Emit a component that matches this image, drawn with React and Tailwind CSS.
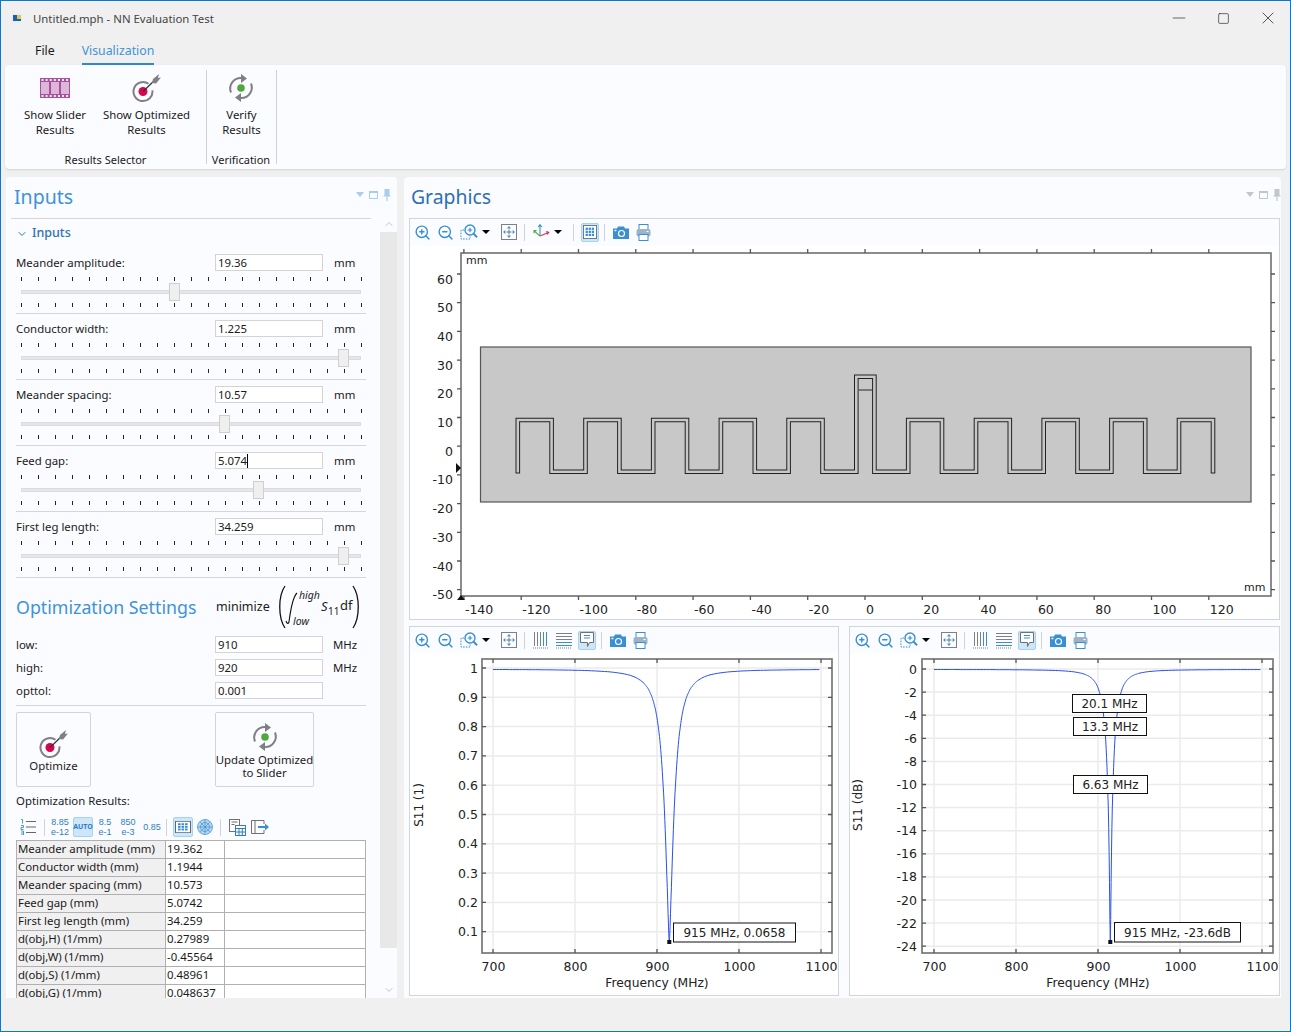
import { Minus, Square, X, ChevronDown, ChevronUp, ZoomIn, ZoomOut } from "lucide-react";

const SLIDERS = [
  { label: "Meander amplitude:", value: "19.36", thumb: 153 },
  { label: "Conductor width:", value: "1.225", thumb: 322 },
  { label: "Meander spacing:", value: "10.57", thumb: 203 },
  { label: "Feed gap:", value: "5.074", thumb: 237, caret: true },
  { label: "First leg length:", value: "34.259", thumb: 322 }
];

const RESULTS = [
  ["Meander amplitude (mm)", "19.362"],
  ["Conductor width (mm)", "1.1944"],
  ["Meander spacing (mm)", "10.573"],
  ["Feed gap (mm)", "5.0742"],
  ["First leg length (mm)", "34.259"],
  ["d(obj,H) (1/mm)", "0.27989"],
  ["d(obj,W) (1/mm)", "-0.45564"],
  ["d(obj,S) (1/mm)", "0.48961"],
  ["d(obj,G) (1/mm)", "0.048637"]
];

const BLUE = "#3a8fd3";
const CHART_FONT = "'DejaVu Sans', sans-serif";

function range(from, to, step) {
  const out = [];
  for (let v = from; step > 0 ? v <= to + 1e-9 : v >= to - 1e-9; v += step) out.push(Math.round(v * 100) / 100);
  return out;
}

function s11(f) {
  const c = 0.996;
  const m = 0.0658;
  const x = (f - 915) / 10;
  const a = 1 - (m * m) / (c * c);
  return c * Math.sqrt(Math.max(1 - a / (1 + x * x), 0));
}

function curvePath(toX, toY) {
  const pts = [];
  for (let f = 700; f <= 1100; f += f > 880 && f < 950 ? 0.5 : 4) pts.push(`${toX(f).toFixed(1)},${toY(s11(f)).toFixed(1)}`);
  return "M" + pts.join("L");
}

function TargetIcon({ className }) {
  return (
    <svg viewBox="0 0 30 30" className={className}>
      <path d="M16.5 10.8a9.5 9.5 0 1 0 3.9 6.5" fill="none" stroke="#808080" strokeWidth="2" />
      <circle cx="11" cy="18.5" r="4.5" fill="#d8064e" />
      <path d="M11 18.5L24 6" stroke="#333" strokeWidth="1.2" />
      <path d="M21 6l6-5-1 4 3-.5-5 6-4-.5z" fill="#808080" />
    </svg>
  );
}

function SyncIcon({ className }) {
  return (
    <svg viewBox="0 0 30 30" className={className}>
      <path d="M5 19.5a10.5 10.5 0 0 1 11-14.4" fill="none" stroke="#808080" strokeWidth="2" />
      <path d="M15 1l6 4.5-6 4.5z" fill="#808080" />
      <path d="M25 10.5a10.5 10.5 0 0 1-11 14.4" fill="none" stroke="#808080" strokeWidth="2" />
      <path d="M15 29l-6-4.5 6-4.5z" fill="#808080" />
      <circle cx="15" cy="15" r="3.8" fill="#4fa83d" />
    </svg>
  );
}

function FilmIcon() {
  return (
    <svg viewBox="0 0 30 20" className="w-[30px] h-[20px]">
      <rect width="30" height="20" fill="#a9509f" />
      {[1, 11, 21].map((x) => (
        <rect key={x} x={x} y="4" width="8" height="12" fill="#dcb7d8" />
      ))}
      {range(1.5, 27, 4.1).map((x) => (
        <g key={x} fill="#f5e9f4">
          <rect x={x} y="1" width="2" height="2" />
          <rect x={x} y="17" width="2" height="2" />
        </g>
      ))}
    </svg>
  );
}

function ZoomBoxIcon() {
  return (
    <svg viewBox="0 0 18 18" className="w-[18px] h-[18px]" fill="none" stroke={BLUE}>
      <circle cx="10" cy="7" r="5" strokeWidth="1.4" />
      <path d="M13.6 10.6l3.4 3.6" strokeWidth="2" />
      <path d="M7.7 7h4.6M10 4.7v4.6" strokeWidth="1.2" />
      <path d="M4 7H1v9h9v-2.5" strokeWidth="1" strokeDasharray="1.6 1.2" />
    </svg>
  );
}

function FitIcon() {
  return (
    <svg viewBox="0 0 16 16" className="w-[16px] h-[16px]">
      <rect x="0.5" y="0.5" width="15" height="15" fill="none" stroke="#808080" />
      <path d="M8 2l2 2.4H6zM8 14l2-2.4H6zM2 8l2.4-2v4zM14 8l-2.4-2v4z" fill={BLUE} />
      <path d="M5.5 8h5M8 5.5v5" stroke="#707070" strokeWidth="1" />
    </svg>
  );
}

function AxesIcon() {
  return (
    <svg viewBox="0 0 18 18" className="w-[18px] h-[18px]" fill="none" strokeWidth="1.1">
      <path d="M8 13V2M6.2 4L8 1.6 9.8 4" stroke={BLUE} />
      <path d="M8 13l8.5-3.5M14.2 8.6l2.6.8-1.6 2.1" stroke="#d8306e" />
      <path d="M8 13L2 7.8M2 10.2V7.6h2.6" stroke="#5aa84a" />
    </svg>
  );
}

function CameraIcon() {
  return (
    <svg viewBox="0 0 16 13" className="w-[16px] h-[13px]">
      <path d="M0 2.5h4L5 .5h6l1 2h4V13H0z" fill={BLUE} />
      <circle cx="8.5" cy="7.5" r="3.6" fill="#fff" />
      <circle cx="8.5" cy="7.5" r="2.4" fill={BLUE} />
      <rect x="1.4" y="3.8" width="2" height="1.4" fill="#fff" />
    </svg>
  );
}

function PrinterIcon() {
  return (
    <svg viewBox="0 0 15 17" className="w-[15px] h-[17px]">
      <rect x="3" y="0.5" width="9" height="5" fill="#fff" stroke={BLUE} />
      <rect x="0.5" y="5" width="14" height="7.5" rx="2" fill="#9db4c8" />
      <rect x="10.5" y="7" width="2" height="1" fill="#fff" />
      <rect x="3" y="10.5" width="9" height="6" fill="#fff" stroke={BLUE} />
    </svg>
  );
}

function TableGridIcon({ wide }) {
  return (
    <svg viewBox="0 0 16 16" className={wide ? "w-[16px] h-[12px]" : "w-[14px] h-[14px]"} preserveAspectRatio="none">
      <rect x="0.5" y="0.5" width="15" height="15" fill="#fff" stroke="#5a6a78" />
      {[3, 6.5, 10].map((x) =>
        [3, 6.5, 10].map((y) => <rect key={`${x}-${y}`} x={x} y={y} width="2.6" height="2.6" fill={BLUE} />)
      )}
    </svg>
  );
}

function VGridIcon() {
  return (
    <svg viewBox="0 0 16 17" className="w-[16px] h-[17px]" fill="none">
      <path d="M1.5 0v14M4.5 0v14M7.5 0v14" stroke="#808080" />
      <path d="M10.5 0v14M13.5 0v14" stroke={BLUE} />
      <path d="M0 16h16" stroke="#808080" strokeDasharray="1 1" />
    </svg>
  );
}

function HGridIcon() {
  return (
    <svg viewBox="0 0 16 17" className="w-[16px] h-[17px]" fill="none">
      <path d="M0 1.5h16M0 4.5h16M0 7.5h16" stroke="#808080" />
      <path d="M0 10.5h16M0 13.5h16" stroke={BLUE} />
      <path d="M0 16h16" stroke="#808080" strokeDasharray="1 1" />
    </svg>
  );
}

function CommentIcon() {
  return (
    <svg viewBox="0 0 14 16" className="w-[14px] h-[16px]" fill="#fff">
      <path d="M.5.5h13v10H9.5l-2 4v-4h-7z" stroke="#707070" />
      <path d="M4 3.5h6M4 6h6" stroke={BLUE} />
    </svg>
  );
}

function Cell({ children, className = "" }) {
  return <div className={`w-[23px] h-[24px] flex items-center justify-center shrink-0 ${className}`}>{children}</div>;
}

function Caret() {
  return (
    <div className="w-[10px] ml-[1px] flex justify-center shrink-0">
      <div className="w-0 h-0 border-x-[4px] border-x-transparent border-t-[4px] border-t-black" />
    </div>
  );
}

function Sep({ className = "" }) {
  return <div className={`w-px h-[17px] bg-[#cfd3d8] shrink-0 ${className}`} />;
}

function Active({ children, className = "" }) {
  return (
    <div className={`w-[18px] h-[19px] flex items-center justify-center shrink-0 rounded-[2px] bg-[#cde6fa] border border-[#a6d2f3] ${className}`}>
      {children}
    </div>
  );
}

function ZoomGroup() {
  return (
    <>
      <Cell><ZoomIn size={17} color={BLUE} strokeWidth={2} /></Cell>
      <Cell><ZoomOut size={17} color={BLUE} strokeWidth={2} /></Cell>
      <Cell><ZoomBoxIcon /></Cell>
      <Caret />
      <Cell className="ml-[6px]"><FitIcon /></Cell>
      <Sep className="ml-[4px]" />
    </>
  );
}

function PaneControls({ color }) {
  return (
    <div className="flex items-center gap-[5px]">
      <div className="w-0 h-0 border-x-[4px] border-x-transparent border-t-[5px]" style={{ borderTopColor: color }} />
      <div className="w-[9px] h-[8px] border border-t-2" style={{ borderColor: color }} />
      <svg viewBox="0 0 8 12" className="w-[8px] h-[12px]">
        <path d="M1.5 0h5v6l1.5 1.5H0L1.5 6zM3.4 7.5h1.2V12H3.4z" fill={color} />
      </svg>
    </div>
  );
}

function TextBox({ value, caret }) {
  return (
    <div className="w-[108px] h-[17px] border border-[#d4d4d4] bg-white pl-[2px] text-[11.4px] leading-[15px] flex items-center text-[#1a1a1a]">
      {value}
      {caret && <span className="w-px h-[14px] bg-black" />}
    </div>
  );
}

function SliderRow({ label, value, thumb, caret }) {
  const ticks = range(0, 20, 1);
  const row = (
    <div className="mx-[5px] w-[341px] flex justify-between">
      {ticks.map((t) => <span key={t} className="w-px h-[4px] bg-[#222]" />)}
    </div>
  );
  return (
    <div className="h-[66px] border-b border-[#d6d6d6] pt-[6px]">
      <div className="flex items-center h-[17px]">
        <div className="w-[199px] text-[11.4px]">{label}</div>
        <TextBox value={value} caret={caret} />
        <div className="ml-[11px] text-[11.4px]">mm</div>
      </div>
      <div className="relative mt-[6px]">
        {row}
        <div className="mx-[5px] w-[340px] h-[4px] mt-[9px] mb-[9px] bg-[#e6e6e6] border border-[#dcdcdc]" />
        {row}
        <div
          className="absolute top-[6px] w-[11px] h-[18px] bg-[#efefef] border border-[#cfcfcf]"
          style={{ left: thumb }}
        />
      </div>
    </div>
  );
}

function FieldRow({ label, value, unit }) {
  return (
    <div className="flex items-center h-[17px] mb-[6px]">
      <div className="w-[199px] text-[11.4px]">{label}</div>
      <TextBox value={value} />
      {unit && <div className="ml-[10px] text-[11.4px]">{unit}</div>}
    </div>
  );
}

function Formula() {
  return (
    <svg viewBox="0 0 84 46" className="w-[84px] h-[46px] ml-[7px] shrink-0">
      <path d="M8 2C1 12 1 34 8 44" fill="none" stroke="#111" strokeWidth="1.3" />
      <path d="M76 2C83 12 83 34 76 44" fill="none" stroke="#111" strokeWidth="1.3" />
      <path d="M20 9C16 13 14 22 12 38c-.5 2-2 2-3-1" fill="none" stroke="#111" strokeWidth="1.1" />
      <text x="22" y="15" fontSize="10.5" fontStyle="italic" fontFamily="'Noto Sans', sans-serif" fill="#222">high</text>
      <text x="16" y="41" fontSize="10.5" fontStyle="italic" fontFamily="'Noto Sans', sans-serif" fill="#222">low</text>
      <text x="44" y="27" fontSize="13" fontStyle="italic" fontFamily="'Noto Sans', sans-serif" fill="#222">S</text>
      <text x="51" y="31" fontSize="10" fontFamily="'Noto Sans', sans-serif" fill="#222">11</text>
      <text x="63" y="26" fontSize="13" fontFamily="'Noto Sans', sans-serif" fill="#222">df</text>
    </svg>
  );
}

function NumIcon({ top, bottom, className = "" }) {
  return (
    <div className={`flex flex-col items-center justify-center shrink-0 font-['Liberation_Sans',sans-serif] text-[9px] leading-[10.5px] text-[#2f7fc1] ${className}`}>
      <div>{top}</div>
      {bottom && <div>{bottom}</div>}
    </div>
  );
}

function ResultsToolbar() {
  return (
    <div className="flex items-center h-[24px] mt-[6px] pl-[4px]">
      <svg viewBox="0 0 16 16" className="w-[16px] h-[16px] shrink-0" fill="none">
        <path d="M6 2.5h10M6 8h10M6 13.5h10" stroke="#666" />
        <path d="M1 .5h1.5v4M1 6.5h2.5v2H1v2h2.5M1 12h2.5v4H1M1 14h2.5" stroke={BLUE} strokeWidth="0.9" />
      </svg>
      <Sep className="ml-[8px]" />
      <NumIcon top="8.85" bottom="e-12" className="w-[24px] ml-[3px]" />
      <Active className="ml-[1px] !w-[20px] !h-[20px]">
        <span className="text-[7px] font-bold text-[#2f7fc1]">AUTO</span>
      </Active>
      <NumIcon top="8.5" bottom="e-1" className="w-[24px]" />
      <NumIcon top="850" bottom="e-3" className="w-[24px] ml-[-1px]" />
      <NumIcon top="0.85" className="w-[22px] ml-[1px]" />
      <Sep className="ml-[3px]" />
      <Active className="ml-[6px] !w-[20px] !h-[20px]"><TableGridIcon wide /></Active>
      <svg viewBox="0 0 16 16" className="w-[16px] h-[16px] ml-[4px] shrink-0" fill="#b9d6ef" stroke={BLUE} strokeWidth="0.7">
        <circle cx="8" cy="8" r="7.5" />
        <circle cx="8" cy="8" r="4.5" fill="none" />
        <path d="M8 .5v15M.5 8h15M2.7 2.7l10.6 10.6M13.3 2.7L2.7 13.3" />
      </svg>
      <Sep className="ml-[7px]" />
      <svg viewBox="0 0 17 17" className="w-[17px] h-[17px] ml-[8px] shrink-0" fill="#fff">
        <rect x="0.5" y="0.5" width="10" height="12" stroke="#707070" />
        <path d="M2.5 3h6M2.5 5.5h3" stroke="#707070" />
        <rect x="6.5" y="6.5" width="10" height="10" stroke="#2f7fc1" />
        <path d="M6.5 9.5h10M6.5 13h10M10 9.5v7M13.3 9.5v7" stroke="#2f7fc1" />
      </svg>
      <svg viewBox="0 0 18 14" className="w-[18px] h-[14px] ml-[5px] shrink-0" fill="none">
        <path d="M13 4V.5H.5v13H13V10" stroke="#707070" />
        <path d="M4 .5v13" stroke="#707070" />
        <path d="M7 7h7" stroke={BLUE} strokeWidth="2" />
        <path d="M14 3.5L18 7l-4 3.5z" fill={BLUE} />
      </svg>
    </div>
  );
}

function ResultsTable() {
  return (
    <div className="mt-[1px] w-[350px] border-t border-x border-[#b0b0b0]">
      {RESULTS.map(([name, value]) => (
        <div key={name} className="flex h-[18px] border-b border-[#b0b0b0] text-[11.4px] leading-[16px]">
          <div className="w-[149px] shrink-0 bg-[#f0f0f0] pl-[1px] border-r border-[#b0b0b0] whitespace-nowrap overflow-hidden">{name}</div>
          <div className="w-[59px] shrink-0 bg-white pl-[1px] border-r border-[#b0b0b0] whitespace-nowrap overflow-hidden">{value}</div>
          <div className="flex-1 bg-white" />
        </div>
      ))}
    </div>
  );
}

function InputsPanel() {
  return (
    <div className="w-[391px] h-full bg-[#fafcff] rounded-t-[4px] flex flex-col text-[#1a1a1a] overflow-hidden">
      <div className="h-[38px] shrink-0 flex items-center justify-between pl-[8px] pr-[6px]">
        <div className="text-[19.5px] text-[#3f93d8] leading-[28px] mt-[2px]">Inputs</div>
        <div className="mt-[-3px]"><PaneControls color="#a9cdec" /></div>
      </div>
      <div className="flex flex-1 min-h-0">
        <div className="w-[374px] overflow-hidden pl-[10px] pr-[14px]">
          <div className="h-[3px] border-b border-[#d6d6d6] -mx-[5px] box-content" />
          <div className="h-[29px] flex items-center text-[12.5px] font-medium text-[#2f72b5] gap-[4px]">
            <ChevronDown size={12} strokeWidth={2} color="#2f72b5" />
            Inputs
          </div>
          {SLIDERS.map((s) => <SliderRow key={s.label} {...s} />)}
          <div className="flex items-center h-[58px]">
            <div className="w-[200px] text-[17.8px] text-[#3f93d8] whitespace-nowrap">Optimization Settings</div>
            <div className="text-[12.5px]">minimize</div>
            <Formula />
          </div>
          <FieldRow label="low:" value="910" unit="MHz" />
          <FieldRow label="high:" value="920" unit="MHz" />
          <FieldRow label="opttol:" value="0.001" />
          <div className="border-b border-[#d6d6d6] h-px mb-[6px]" />
          <div className="flex h-[75px] text-[11.4px]">
            <div className="w-[75px] border border-[#d4d4d4] rounded-[2px] flex flex-col items-center pt-[16px] bg-[#fafcff]">
              <TargetIcon className="w-[30px] h-[30px] shrink-0" />
              <div className="mt-[-2px]">Optimize</div>
            </div>
            <div className="ml-[124px] w-[99px] border border-[#d4d4d4] rounded-[2px] flex flex-col items-center pt-[9px] leading-[13px] text-center">
              <SyncIcon className="w-[30px] h-[30px] shrink-0" />
              <div className="mt-[1px] whitespace-nowrap">Update Optimized</div>
              <div>to Slider</div>
            </div>
          </div>
          <div className="text-[11.4px] mt-[6px] h-[16px] leading-[16px]">Optimization Results:</div>
          <ResultsToolbar />
          <ResultsTable />
        </div>
        <div className="w-[17px] flex flex-col items-center shrink-0 ml-0 bg-[#fafcff]">
          <div className="h-[17px] flex items-center"><ChevronUp size={12} color="#c4c4c4" /></div>
          <div className="w-full h-[716px] bg-[#e8e8e8]" />
          <div className="flex-1" />
          <div className="h-[17px] flex items-center"><ChevronDown size={12} color="#c4c4c4" /></div>
        </div>
      </div>
    </div>
  );
}

function MainPlot() {
  const legs = [517.8, 551.6, 585.5, 619.4, 653.2, 687, 720.9, 754.8, 788.6, 822.5, 856.3, 874.4, 908.2, 942, 976, 1009.8, 1043.7, 1077.5, 1111.4, 1145.2, 1179, 1213];
  const top = 420;
  const bottom = 471.7;
  let d = `M${legs[0]} 473.5`;
  legs.forEach((x, i) => {
    const next = legs[i + 1];
    const y = i % 2 === 0 ? (i === 10 ? 376.7 : top) : bottom;
    d += `L${x} ${y}`;
    if (next) d += `L${next} ${y}`;
  });
  d += `L${legs[21]} 473.5`;
  const inner = d.replace(/473\.5/g, "472.6");
  const xTicks = range(-140, 120, 20);
  const yTicks = range(60, -50, -10);
  const tx = (v) => 865 + (v / 20) * 57.3;
  const ty = (v) => 274 + ((60 - v) / 10) * 28.7;
  return (
    <svg viewBox="410 246 869 373" className="w-[869px] h-[373px] block bg-white" style={{ fontFamily: CHART_FONT }}>
      <rect x="461" y="253" width="810" height="343" fill="none" stroke="#707070" strokeWidth="1.6" />
      {xTicks.map((v) => (
        <g key={v}>
          <path d={`M${tx(v)} 249V253M${tx(v)} 596V600`} stroke="#555" strokeWidth="1.3" />
          <text x={tx(v) + 1} y="614" fontSize="12.5" fill="#222">{v}</text>
        </g>
      ))}
      {yTicks.map((v) => (
        <g key={v}>
          <path d={`M457 ${ty(v)}H461M1271 ${ty(v)}H1275`} stroke="#555" strokeWidth="1.3" />
          <text x="453" y={ty(v) + 9.5} fontSize="12.5" fill="#222" textAnchor="end">{v}</text>
        </g>
      ))}
      <text x="466" y="264" fontSize="11" fill="#222">mm</text>
      <text x="1244" y="591" fontSize="11" fill="#222">mm</text>
      <rect x="480.5" y="347" width="770.5" height="155" fill="#c8c8c8" stroke="#555" strokeWidth="1.2" />
      <path d={d} fill="none" stroke="#222" strokeWidth="4.6" />
      <path d={inner} fill="none" stroke="#c8c8c8" strokeWidth="2.6" />
      <path d="M858.5 390H872.3" stroke="#555" strokeWidth="1.4" />
      <path d="M456 463l5 5-5 5z" fill="#111" />
      <path d="M457 600l4-5 4 5z" fill="#111" />
    </svg>
  );
}

function Callout({ x, y, w, h, text }) {
  return (
    <g>
      <rect x={x} y={y} width={w} height={h} fill="#fff" stroke="#111" strokeWidth="1" />
      <text x={x + w / 2} y={y + h / 2 + 4.5} fontSize="12" textAnchor="middle" fill="#222">{text}</text>
    </g>
  );
}

function FrequencyChart({ viewX, frameL, frameR, x0, ylabel, yTicks, toY, toYValue, callouts, ylabelX, labelX }) {
  const tx = (f) => x0 + ((f - 700) / 100) * 82;
  const xTicks = [700, 800, 900, 1000, 1100];
  return (
    <svg viewBox={`${viewX} 653 428 342`} className="w-[428px] h-[342px] block bg-white" style={{ fontFamily: CHART_FONT }}>
      {xTicks.map((f) => (
        <path key={f} d={`M${tx(f)} 659V953`} stroke="#ebebeb" strokeWidth="1.5" />
      ))}
      {yTicks.map((v) => (
        <path key={v} d={`M${frameL} ${toY(v)}H${frameR}`} stroke="#ebebeb" strokeWidth="1.5" />
      ))}
      <path d={curvePath(tx, toYValue)} fill="none" stroke="#2a4ff0" strokeWidth="1" />
      <rect x={frameL} y="659" width={frameR - frameL} height="294" fill="none" stroke="#777" strokeWidth="1.7" />
      {xTicks.map((f) => (
        <g key={f}>
          <path d={`M${tx(f)} 659V663M${tx(f)} 949V953`} stroke="#555" strokeWidth="1.3" />
          <text x={tx(f) + 0.5} y="971" fontSize="12.5" textAnchor="middle" fill="#222">{f}</text>
        </g>
      ))}
      {yTicks.map((v) => (
        <g key={v}>
          <path d={`M${frameL} ${toY(v)}h4M${frameR} ${toY(v)}h-4`} stroke="#555" strokeWidth="1.3" />
          <text x={labelX} y={toY(v) + 4.5} fontSize="12.5" textAnchor="end" fill="#222">{v}</text>
        </g>
      ))}
      <text x={x0 + 164} y="987" fontSize="12.3" textAnchor="middle" fill="#222">Frequency (MHz)</text>
      <text transform={`translate(${ylabelX} 805) rotate(-90)`} fontSize="12" textAnchor="middle" fill="#222">{ylabel}</text>
      <rect x={tx(915) - 2} y="940" width="4" height="4" fill="#111" />
      {callouts.map((c) => <Callout key={c.text} {...c} />)}
    </svg>
  );
}

function ChartToolbar() {
  return (
    <div className="h-[26px] flex items-center pl-[1px]">
      <ZoomGroup />
      <Cell className="ml-[4px]"><VGridIcon /></Cell>
      <Cell><HGridIcon /></Cell>
      <Active className="ml-[3px]"><CommentIcon /></Active>
      <Sep className="ml-[5px]" />
      <Cell className="ml-[4px]"><CameraIcon /></Cell>
      <Cell><PrinterIcon /></Cell>
    </div>
  );
}

function GraphicsPanel() {
  const linY = (v) => 668 + (1 - v) * 293;
  const dbY = (v) => 669 + (-v / 2) * 23.1;
  return (
    <div className="w-[877px] h-full ml-[7px] bg-[#fafcff] rounded-t-[4px] pl-[5px] overflow-hidden">
      <div className="h-[41px] flex items-center justify-between pl-[2px] pr-[0px]">
        <div className="text-[19.4px] text-[#2f6fb3] leading-[28px] mt-[-2px]">Graphics</div>
        <div className="mt-[-6px]"><PaneControls color="#c0c6cc" /></div>
      </div>
      <div className="w-[871px] h-[402px] border border-[#d2d6da]">
        <div className="h-[27px] pb-[1px] flex items-center pl-[1px]">
          <ZoomGroup />
          <Cell className="ml-[4px]"><AxesIcon /></Cell>
          <Caret />
          <Sep className="ml-[10px]" />
          <Active className="ml-[7px]"><TableGridIcon /></Active>
          <Sep className="ml-[5px]" />
          <Cell className="ml-[4px]"><CameraIcon /></Cell>
          <Cell><PrinterIcon /></Cell>
        </div>
        <MainPlot />
      </div>
      <div className="flex gap-[10px] mt-[6px]">
        <div className="w-[430px] h-[370px] border border-[#d2d6da]">
          <ChartToolbar />
          <FrequencyChart
            viewX={410}
            frameL={482}
            frameR={832}
            x0={493}
            ylabel="S11 (1)"
            ylabelX={423}
            labelX={478}
            yTicks={[1, 0.9, 0.8, 0.7, 0.6, 0.5, 0.4, 0.3, 0.2, 0.1]}
            toY={linY}
            toYValue={linY}
            callouts={[{ x: 673.5, y: 923, w: 122, h: 19, text: "915 MHz, 0.0658" }]}
          />
        </div>
        <div className="w-[431px] h-[370px] border border-[#d2d6da]">
          <ChartToolbar />
          <FrequencyChart
            viewX={850}
            frameL={922}
            frameR={1273}
            x0={934}
            ylabel="S11 (dB)"
            ylabelX={862}
            labelX={917}
            yTicks={range(0, -24, -2)}
            toY={dbY}
            toYValue={(s) => dbY(20 * Math.log10(s))}
            callouts={[
              { x: 1072.5, y: 694.5, w: 74, h: 18, text: "20.1 MHz" },
              { x: 1073.5, y: 717.5, w: 73, h: 18, text: "13.3 MHz" },
              { x: 1073.5, y: 775.5, w: 74, h: 18, text: "6.63 MHz" },
              { x: 1114.5, y: 922.5, w: 126, h: 19.5, text: "915 MHz, -23.6dB" }
            ]}
          />
        </div>
      </div>
    </div>
  );
}

function RibbonButton({ icon, lines, className = "" }) {
  return (
    <div className={`flex flex-col items-center text-[11.4px] leading-[15px] text-center text-[#1a1a1a] shrink-0 ${className}`}>
      <div className="h-[34px] pt-[1px] flex items-center justify-center">{icon}</div>
      <div className="mt-[3px]">
        {lines.map((line) => <div key={line} className="whitespace-nowrap">{line}</div>)}
      </div>
    </div>
  );
}

function Ribbon() {
  return (
    <div className="mx-[4px] h-[104px] bg-[#fafcff] rounded-[4px] flex pt-[5px] shadow-[0_1px_2px_rgba(0,0,0,0.12)]">
      <div className="w-[202px] h-[94px] border-r border-[#d0d0d0] flex flex-col">
        <div className="flex flex-1">
          <RibbonButton className="w-[100px]" icon={<FilmIcon />} lines={["Show Slider", "Results"]} />
          <RibbonButton className="w-[91px] ml-[-4px]" icon={<TargetIcon className="w-[30px] h-[30px]" />} lines={["Show Optimized", "Results"]} />
        </div>
        <div className="text-center text-[11px] leading-[14px] mb-[-3px]">Results Selector</div>
      </div>
      <div className="w-[70px] h-[94px] border-r border-[#d0d0d0] flex flex-col">
        <div className="flex flex-1 justify-center">
          <RibbonButton icon={<SyncIcon className="w-[30px] h-[30px]" />} lines={["Verify", "Results"]} />
        </div>
        <div className="text-center text-[11px] leading-[14px] mb-[-3px] pr-[1px] whitespace-nowrap">Verification</div>
      </div>
    </div>
  );
}

export default function App() {
  return (
    <div className="w-[1291px] h-[1032px] bg-[#f0f0f0] border border-[#0a78d0] flex flex-col overflow-hidden font-['Noto_Sans',sans-serif] text-[#1a1a1a]">
      <div className="h-[34px] shrink-0 flex items-center text-[11.4px]">
        <svg viewBox="0 0 12 12" className="w-[12px] h-[12px] ml-[10px]">
          <rect x="0.5" y="1" width="11" height="10" rx="2" fill="#e8eef5" />
          <rect x="2" y="3" width="8" height="6" fill="#1f5fae" />
          <rect x="6" y="3" width="4" height="4" fill="#e2c83e" />
        </svg>
        <div className="ml-[10px] text-[#444] pt-[1px]">Untitled.mph - NN Evaluation Test</div>
        <div className="ml-auto flex items-center text-[#222]">
          <Minus size={20} strokeWidth={0.8} className="mr-[28px]" />
          <Square size={13} strokeWidth={1.2} className="mr-[28px]" />
          <X size={20} strokeWidth={0.9} className="mr-[12px]" />
        </div>
      </div>
      <div className="h-[30px] shrink-0 flex text-[12.3px]">
        <div className="ml-[34px] pt-[7px]">File</div>
        <div className="ml-[27px] pt-[7px] h-[30px] border-b-2 border-[#2f8bd0] text-[#3f93d8]">Visualization</div>
      </div>
      <Ribbon />
      <div className="flex h-[821px] mt-[8px] ml-[5px] shrink-0">
        <InputsPanel />
        <GraphicsPanel />
      </div>
    </div>
  );
}
